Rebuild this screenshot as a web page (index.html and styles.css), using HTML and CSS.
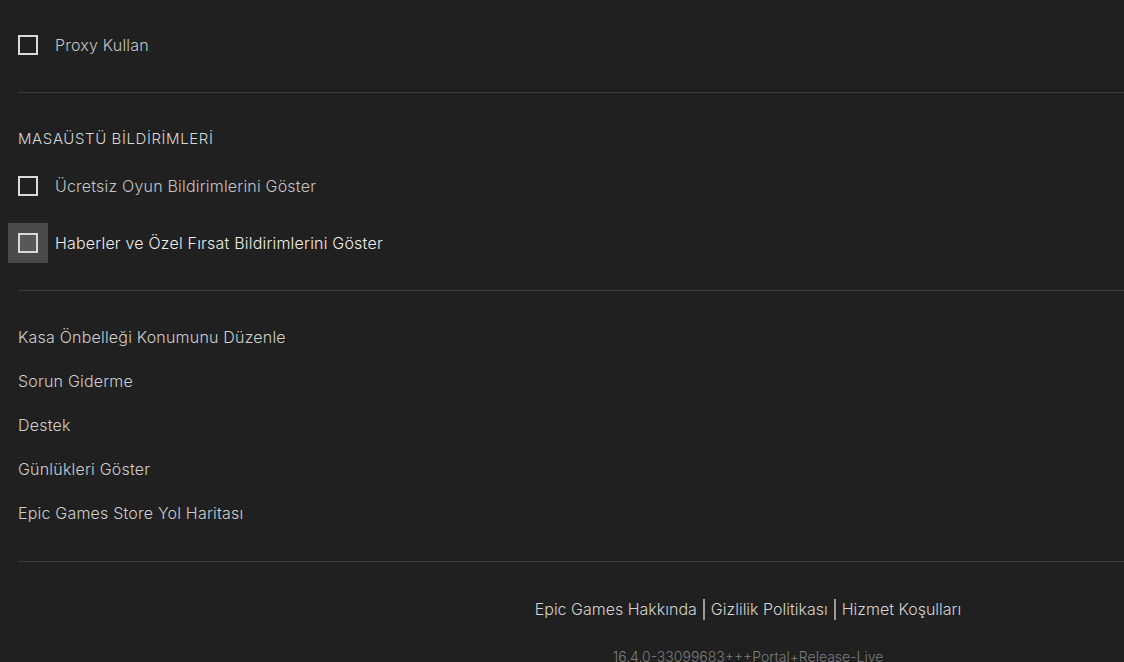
FILE: index.html
```html
<!DOCTYPE html>
<html lang="tr">
<head>
    <meta charset="UTF-8">
    <meta name="viewport" content="width=device-width, initial-scale=1.0">
    <title>Ayarlar</title>
    <link rel="stylesheet" href="styles.css">
</head>
<body>
    <div class="settings">
        <div class="section section-top">
            <label class="check-row">
                <span class="check-hit"><span class="check-box"></span></span>
                <span class="check-label">Proxy Kullan</span>
            </label>
        </div>

        <div class="section section-notify">
            <h3 class="section-title">MASAÜSTÜ BİLDİRİMLERİ</h3>
            <label class="check-row">
                <span class="check-hit"><span class="check-box"></span></span>
                <span class="check-label">Ücretsiz Oyun Bildirimlerini Göster</span>
            </label>
            <label class="check-row hover">
                <span class="check-hit"><span class="check-box"></span></span>
                <span class="check-label">Haberler ve Özel Fırsat Bildirimlerini Göster</span>
            </label>
        </div>

        <div class="section section-links">
            <a class="setting-link" href="#">Kasa Önbelleği Konumunu Düzenle</a>
            <a class="setting-link" href="#">Sorun Giderme</a>
            <a class="setting-link" href="#">Destek</a>
            <a class="setting-link" href="#">Günlükleri Göster</a>
            <a class="setting-link" href="#">Epic Games Store Yol Haritası</a>
        </div>

        <div class="footer">
            <div class="footer-links">
                <a href="#">Epic Games Hakkında</a>
                <span class="sep"></span>
                <a href="#">Gizlilik Politikası</a>
                <span class="sep"></span>
                <a href="#">Hizmet Koşulları</a>
            </div>
            <div class="version">16.4.0-33099683+++Portal+Release-Live</div>
        </div>
    </div>
</body>
</html>
```

FILE: styles.css
```css
html, body {
    margin: 0;
    height: 100%;
    overflow: hidden;
}
body {
    background-color: #202020;
    font-family: Inter, 'Noto Sans', sans-serif;
    font-weight: 300;
    color: #cfcfcf;
}
.settings {
    padding-left: 18px;
}
.section {
    border-bottom: 1px solid #3b3b3b;
}
.section-top {
    padding: 25px 0 27px;
}
.section-notify {
    padding: 36px 0 27px;
}
.section-title {
    margin: 0 0 17px;
    font-size: 15px;
    line-height: 20px;
    font-weight: 300;
    color: #d6d6d6;
    letter-spacing: 0.6px;
}
.check-row {
    display: flex;
    align-items: center;
    height: 40px;
    cursor: pointer;
}
.check-row + .check-row {
    margin-top: 17px;
}
.check-hit {
    display: flex;
    align-items: center;
    justify-content: center;
    width: 40px;
    height: 40px;
    margin-left: -10px;
    margin-right: 7px;
}
.check-box {
    width: 16px;
    height: 16px;
    border: 2px solid #d9d9d9;
}
.check-label {
    font-size: 16px;
    letter-spacing: 0.2px;
    color: #c4c4c4;
}
.check-row.hover .check-hit {
    background-color: #4a4a4a;
}
.check-row.hover .check-box {
    background-color: #575757;
}
.check-row.hover .check-label {
    color: #ececec;
}
.section-links {
    display: flex;
    flex-direction: column;
    align-items: flex-start;
    padding: 24px 0 26px;
}
.setting-link {
    font-size: 16px;
    line-height: 44px;
    letter-spacing: 0.2px;
    color: #cdcdcd;
    text-decoration: none;
}
.footer {
    display: flex;
    flex-direction: column;
    align-items: center;
    padding: 36px 0 0 354px;
}
.footer-links {
    display: flex;
    align-items: center;
    font-size: 16px;
    line-height: 22px;
}
.footer-links a {
    color: #d2d2d2;
    text-decoration: none;
}
.sep {
    width: 2px;
    height: 21px;
    margin: 0 6px;
    background-color: #9a9a9a;
}
.version {
    margin-top: 28px;
    font-size: 14px;
    color: #7d7d7d;
}
```
